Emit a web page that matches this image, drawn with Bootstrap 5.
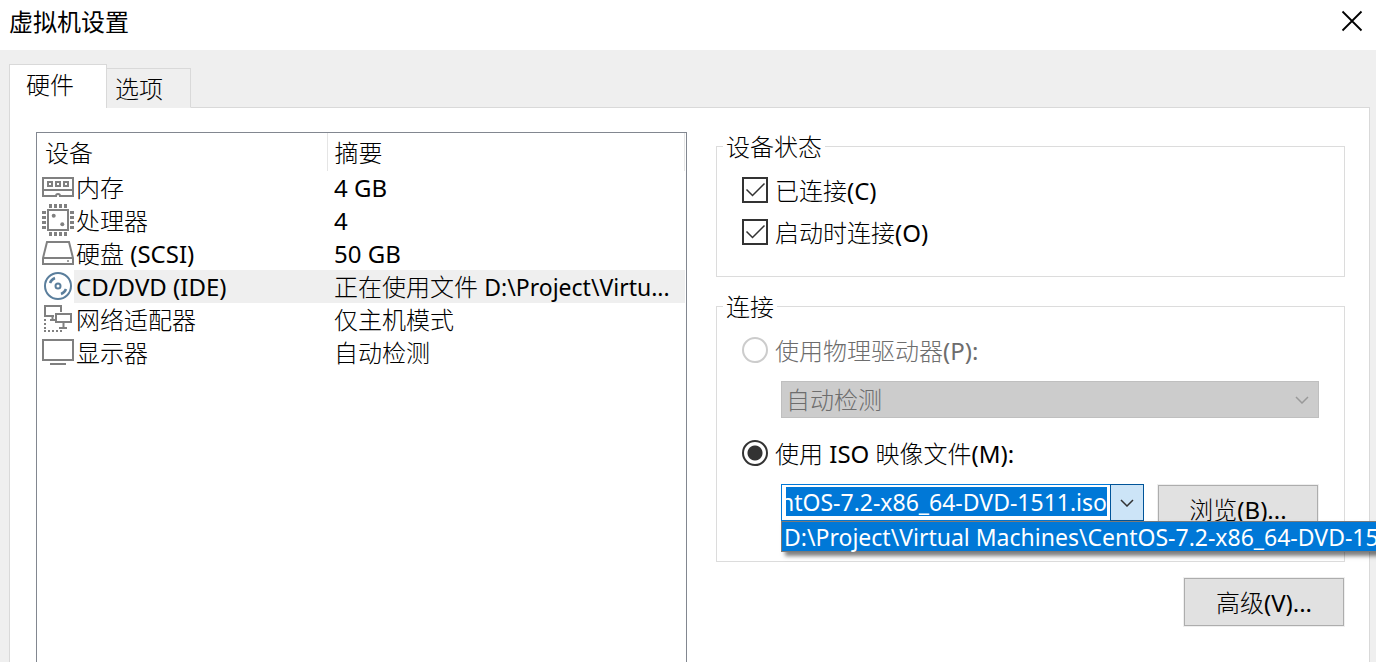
<!DOCTYPE html>
<html lang="zh-CN">
<head>
<meta charset="utf-8">
<meta name="viewport" content="width=device-width, initial-scale=1">
<title>虚拟机设置</title>
<link href="https://cdn.jsdelivr.net/npm/bootstrap@5.3.0/dist/css/bootstrap.min.css" rel="stylesheet">
<style>
  body { font-family: "Noto Sans", "Noto Sans CJK SC", sans-serif; font-size: 24px; line-height: 30px; color: #000; background: #efefef; overflow-x: hidden; }
  .zh { font-family: "Noto Sans CJK SC", sans-serif; font-weight: 300; }
  .file-path { font-size: 23px; }
  .title-bar { height: 50px; padding: 0 13px 8px 9px; }
  .title-bar h1 { font-size: 24px; line-height: 30px; font-family: "Noto Sans CJK SC", sans-serif; font-weight: 400; }
  .close-btn { width: 22px; height: 22px; }
  .workspace { padding: 14px 6px 0 9px; }
  .tab-strip { margin-bottom: -1px; }
  .tab-btn { border: 1px solid #d9d9d9; border-bottom-color: transparent; background: #efefef; line-height: 30px; }
  .tab-btn.active { width: 98px; height: 44px; padding: 0 18px 5px 16px; background: #fff; border-bottom: 0; }
  .tab-btn.other { width: 84px; height: 40px; padding: 0 0 1px 8px; border-left: 0; }
  .pane { border: 1px solid #d9d9d9; border-bottom: 0; display: grid; grid-template-columns: 651fr 629fr; column-gap: 29px; padding: 24px 24px 0 26px; }
  .device-list { border: 1px solid #828790; border-bottom: 0; padding-right: 1px; }
  .device-table { table-layout: fixed; width: 100%; }
  .device-table th { height: 38px; padding: 0 8px 0 8px; border-right: 1px solid #e5e5e5; }
  .device-table th + th { padding-left: 7px; }
  .device-table td { height: 33px; padding: 0 0 0 2px; white-space: nowrap; }
  .device-table td.zh { padding-bottom: 2px; }
  .device-table td.icon-cell { padding-left: 5px; }
  .device-table td:last-child { padding-left: 7px; }
  .device-table tr.chosen td:not(.icon-cell) { background: #efefef; }
  .device-table svg { display: block; }
  .col-icon { width: 37px; }
  .col-device { width: 253px; }
  .group { border: 1px solid #dcdcdc; padding: 9px 25px 0 25px; }
  .group legend { float: none; width: auto; margin: 0 0 0 -19px; padding: 0 3px; font-size: 24px; line-height: 28px; }
  .group.status { padding-bottom: 23px; }
  .group.connection { margin-top: 15px; }
  .choice { height: 42px; gap: 7px; }
  .choice input { appearance: none; width: 26px; height: 26px; margin: 0; flex: none; border: 2px solid #333; background: #fff center / 22px 22px no-repeat; }
  .choice input[type=checkbox]:checked { background-image: url("data:image/svg+xml,%3Csvg xmlns='http://www.w3.org/2000/svg' viewBox='0 0 22 22'%3E%3Cpath d='M2.500 10.500 8.500 16.500 20.500 4.500' fill='none' stroke='%23333' stroke-width='1.500'/%3E%3C/svg%3E"); }
  .choice input[type=radio] { border-radius: 50%; }
  .choice input[type=radio]:checked { background-image: radial-gradient(circle, #333 7px, transparent 8px); }
  .choice input:disabled { border-color: #ccc; }
  .choice input:disabled + label { color: #6d6d6d; }
  .choice.next { margin-top: 14px; }
  .indent { margin-left: 39px; }
  .drive-select { height: 37px; margin-top: 10px; padding: 0 4px 1px 4px; appearance: none; color: #6d6d6d; opacity: 1; border: 1px solid #bfbfbf; border-radius: 0; line-height: 30px;
    background: #ccc url("data:image/svg+xml,%3Csvg xmlns='http://www.w3.org/2000/svg' viewBox='0 0 14 8'%3E%3Cpath d='M1 1 7 7 13 1' fill='none' stroke='%23999' stroke-width='1.500'/%3E%3C/svg%3E") right 9px center / 14px 8px no-repeat; }
  .file-row { gap: 13px; margin: 10px 0 28px 39px; }
  .combo { height: 37px; border: 1px solid #0078d7; }
  .combo input { min-width: 0; border: 0; outline: 0; border-radius: 0; padding: 2px 4px 4px 4px; color: #fff; background: #0078d7; background-clip: content-box; }
  .combo-arrow { width: 34px; margin: -1px; border: 1px solid #005499; background: #cce4f7; }
  .combo-menu { top: 36px; left: -1px; z-index: 5; border: 1px solid #7a7a7a; background: #0078d7; box-shadow: 4px 4px 4px rgba(0,0,0,.5); white-space: nowrap; list-style: none; }
  .combo-menu a { display: block; padding: 0 2px; height: 29px; color: #fff; text-decoration: none; }
  .push-btn { width: 160px; height: 48px; margin: 1px 1px 0; border: 1px solid #adadad; outline: 1px solid #efefef; background: #e1e1e1; }
  .push-btn.advanced { margin-top: 16px; }
</style>
</head>
<body>
<div class="d-flex flex-column min-vh-100 overflow-hidden">
  <header class="title-bar bg-white d-flex align-items-center justify-content-between">
    <h1 class="m-0">虚拟机设置</h1>
    <button type="button" class="close-btn border-0 bg-transparent p-0 d-flex" aria-label="关闭">
      <svg width="22" height="22" viewBox="0 0 22 22" fill="none" stroke="#000" stroke-width="1.800"><path d="M1.500 1.500 20.500 20.500M20.500 1.500 1.500 20.500"/></svg>
    </button>
  </header>

  <main class="workspace flex-grow-1 d-flex flex-column">
    <div class="tab-strip d-flex align-items-end position-relative" role="tablist">
      <button type="button" class="tab-btn active zh text-start" role="tab" aria-selected="true">硬件</button>
      <button type="button" class="tab-btn other zh text-start" role="tab" aria-selected="false">选项</button>
    </div>

    <div class="pane bg-white flex-grow-1">
      <section class="device-list">
        <table class="device-table">
          <colgroup><col class="col-icon"><col class="col-device"><col></colgroup>
          <thead><tr><th colspan="2" class="zh">设备</th><th class="zh">摘要</th></tr></thead>
          <tbody>
            <tr>
              <td class="icon-cell"><svg width="32" height="33" fill="none" stroke="#808080" stroke-width="2"><path d="M1 7H31V25H18A2 2 0 0 0 14 25H1ZM1 19H31M6 11H10V15H6ZM14 11H18V15H14ZM22 11H26V15H22Z"/></svg></td>
              <td class="zh">内存</td><td>4 GB</td>
            </tr>
            <tr>
              <td class="icon-cell"><svg width="32" height="33" fill="none" stroke="#808080" stroke-width="2"><path d="M6 6H26V26H6Z"/><path stroke-width="3" d="M8.500 0V4M13.500 0V4M18.500 0V4M23.500 0V4M8.500 28V32M13.500 28V32M18.500 28V32M23.500 28V32M0 8.500H4M0 13.500H4M0 18.500H4M0 23.500H4M28 8.500H32M28 13.500H32M28 18.500H32M28 23.500H32"/><g fill="#808080" stroke="none"><circle cx="11.700" cy="11.700" r="2"/><circle cx="20.300" cy="20.300" r="2"/></g></svg></td>
              <td class="zh">处理器</td><td>4</td>
            </tr>
            <tr>
              <td class="icon-cell"><svg width="32" height="33" fill="none" stroke="#808080" stroke-width="2"><path d="M5 5H27L31 21V27H1V21ZM1 21H31"/><circle cx="26" cy="24" r="1" fill="#808080" stroke="none"/></svg></td>
              <td><span class="zh">硬盘</span> (SCSI)</td><td>50 GB</td>
            </tr>
            <tr class="chosen">
              <td class="icon-cell"><svg width="32" height="33" fill="none" stroke="#5a7e9c" stroke-width="2"><circle cx="16" cy="16" r="13"/><circle cx="16" cy="16" r="2.500"/><path stroke-width="2.500" d="M8 13A8.500 8.500 0 0 1 13 8M24 19A8.500 8.500 0 0 1 19 24"/></svg></td>
              <td>CD/DVD (IDE)</td><td><span class="zh">正在使用文件</span> <span class="file-path">D:\Project\Virtu...</span></td>
            </tr>
            <tr>
              <td class="icon-cell"><svg width="32" height="33" fill="none" stroke="#808080" stroke-width="2"><path d="M12 13H3V3H19V9M14 11H29V19H14ZM21.500 20V24M17 25H25M10.500 14V17M8 17H13"/><path stroke-dasharray="2 2" d="M3 16V29M2 28H20"/></svg></td>
              <td class="zh">网络适配器</td><td class="zh">仅主机模式</td>
            </tr>
            <tr>
              <td class="icon-cell"><svg width="32" height="33" fill="none" stroke="#808080" stroke-width="2"><path d="M1 4H31V24H1Z"/><path d="M8 28H24"/></svg></td>
              <td class="zh">显示器</td><td class="zh">自动检测</td>
            </tr>
          </tbody>
        </table>
      </section>

      <form class="d-flex flex-column">
        <fieldset class="group status">
          <legend class="zh">设备状态</legend>
          <div class="choice d-flex align-items-center"><input type="checkbox" id="connected" checked><label for="connected"><span class="zh">已连接</span>(C)</label></div>
          <div class="choice d-flex align-items-center"><input type="checkbox" id="poweron" checked><label for="poweron"><span class="zh">启动时连接</span>(O)</label></div>
        </fieldset>

        <fieldset class="group connection">
          <legend class="zh">连接</legend>
          <div class="choice d-flex align-items-center"><input type="radio" name="source" id="physical" disabled><label for="physical"><span class="zh">使用物理驱动器</span>(P):</label></div>
          <div class="indent d-flex"><select class="drive-select zh w-100" aria-label="物理驱动器" disabled><option>自动检测</option></select></div>
          <div class="choice next d-flex align-items-center"><input type="radio" name="source" id="iso" checked><label for="iso"><span class="zh">使用</span> ISO <span class="zh">映像文件</span>(M):</label></div>
          <div class="file-row d-flex align-items-start">
            <div class="combo position-relative d-flex flex-grow-1 bg-white">
              <input type="text" class="file-path flex-grow-1 w-100" id="isoPath" aria-label="ISO 映像文件" value="D:\Project\Virtual Machines\CentOS-7.2-x86_64-DVD-1511.iso">
              <button type="button" class="combo-arrow flex-shrink-0 p-0 d-flex align-items-center justify-content-center" aria-label="展开"><svg width="14" height="8" fill="none" stroke="#333" stroke-width="1.500"><path d="M1 1 7 7 13 1"/></svg></button>
              <ul class="combo-menu file-path position-absolute m-0 p-0"><li><a href="#">D:\Project\Virtual Machines\CentOS-7.2-x86_64-DVD-1511.iso</a></li></ul>
            </div>
            <button type="button" class="push-btn flex-shrink-0 p-0"><span class="zh">浏览</span>(B)...</button>
          </div>
        </fieldset>
        <button type="button" class="push-btn advanced align-self-end p-0"><span class="zh">高级</span>(V)...</button>
      </form>
    </div>
  </main>
</div>
<script src="https://cdn.jsdelivr.net/npm/bootstrap@5.3.0/dist/js/bootstrap.bundle.min.js"></script>
<script>
  // keep the file name, at the end of the path, in view
  const path = document.getElementById('isoPath');
  path.scrollLeft = path.scrollWidth;
</script>
</body>
</html>
